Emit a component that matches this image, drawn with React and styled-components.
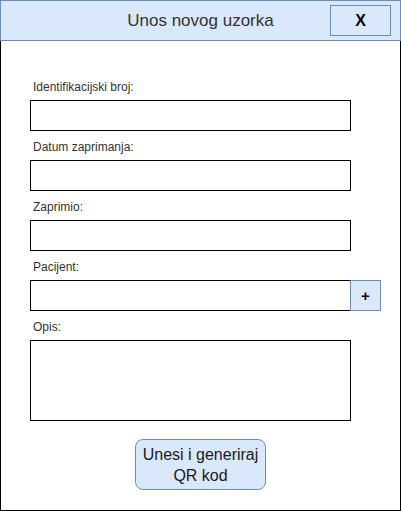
import React, { useState } from "react"
import styled, { createGlobalStyle } from "styled-components"

const GlobalStyle = createGlobalStyle`
  html, body {
    margin: 0;
    padding: 0;
    background: #fff;
  }
  * {
    box-sizing: border-box;
  }
`

const Window = styled.div`
  width: 401px;
  height: 511px;
  border: 1px solid #000;
  background: #fff;
  font-family: "Liberation Sans", Arial, sans-serif;
  display: flex;
  flex-direction: column;
`

const Header = styled.div`
  margin: -1px -1px 0;
  height: 41px;
  background: #dae8fc;
  border: 1px solid #6c8ebf;
  display: grid;
  grid-template-columns: 1fr auto 1fr;
  align-items: center;
`

const Title = styled.div`
  grid-column: 2;
  font-size: 17px;
  color: #333;
`

const CloseButton = styled.button`
  grid-column: 3;
  justify-self: end;
  margin-right: 9px;
  width: 61px;
  height: 31px;
  background: #dae8fc;
  border: 1px solid #6c8ebf;
  font-family: inherit;
  font-weight: bold;
  font-size: 16px;
  color: #000;
  padding: 0;
  cursor: pointer;
`

const Body = styled.form`
  display: flex;
  flex-direction: column;
  padding: 39px 0 0 29px;
  gap: 9px;
`

const Field = styled.div`
  display: flex;
  flex-direction: column;
`

const Label = styled.label`
  font-size: 12px;
  line-height: 14px;
  color: #333;
  margin: 0 0 6px 3px;
`

const Input = styled.input`
  width: 321px;
  height: 31px;
  border: 1px solid #000;
  border-radius: 0;
  padding: 0 6px;
  font-family: inherit;
  font-size: 12px;
  outline: none;
`

const Row = styled.div`
  display: flex;
`

const AddButton = styled.button`
  width: 31px;
  height: 31px;
  margin-left: -1px;
  background: #dae8fc;
  border: 1px solid #6c8ebf;
  font-family: inherit;
  font-weight: bold;
  font-size: 15px;
  color: #000;
  padding: 0;
  cursor: pointer;
`

const TextArea = styled.textarea`
  width: 321px;
  height: 81px;
  border: 1px solid #000;
  border-radius: 0;
  resize: none;
  padding: 4px 6px;
  font-family: inherit;
  font-size: 12px;
  outline: none;
`

const SubmitButton = styled.button`
  align-self: flex-start;
  margin: 9px 0 0 105px;
  width: 131px;
  height: 51px;
  background: #dae8fc;
  border: 1px solid #6c8ebf;
  border-radius: 8px;
  font-family: inherit;
  font-size: 16px;
  line-height: 21px;
  color: #1a1a1a;
  padding: 0;
  cursor: pointer;
`

const fields = [
  { id: "id", label: "Identifikacijski broj:" },
  { id: "datum", label: "Datum zaprimanja:" },
  { id: "zaprimio", label: "Zaprimio:" },
]

const App = () => {
  const [values, setValues] = useState({})

  const update = (key) => (e) => setValues({ ...values, [key]: e.target.value })

  return (
    <>
      <GlobalStyle />
      <Window>
        <Header>
          <Title>Unos novog uzorka</Title>
          <CloseButton type="button">X</CloseButton>
        </Header>
        <Body onSubmit={(e) => e.preventDefault()}>
          {fields.map((f) => (
            <Field key={f.id}>
              <Label htmlFor={f.id}>{f.label}</Label>
              <Input id={f.id} value={values[f.id] || ""} onChange={update(f.id)} />
            </Field>
          ))}
          <Field>
            <Label htmlFor="pacijent">Pacijent:</Label>
            <Row>
              <Input id="pacijent" value={values.pacijent || ""} onChange={update("pacijent")} />
              <AddButton type="button">+</AddButton>
            </Row>
          </Field>
          <Field>
            <Label htmlFor="opis">Opis:</Label>
            <TextArea id="opis" value={values.opis || ""} onChange={update("opis")} />
          </Field>
          <SubmitButton type="submit">
            Unesi i generiraj
            <br />
            QR kod
          </SubmitButton>
        </Body>
      </Window>
    </>
  )
}

export default App
